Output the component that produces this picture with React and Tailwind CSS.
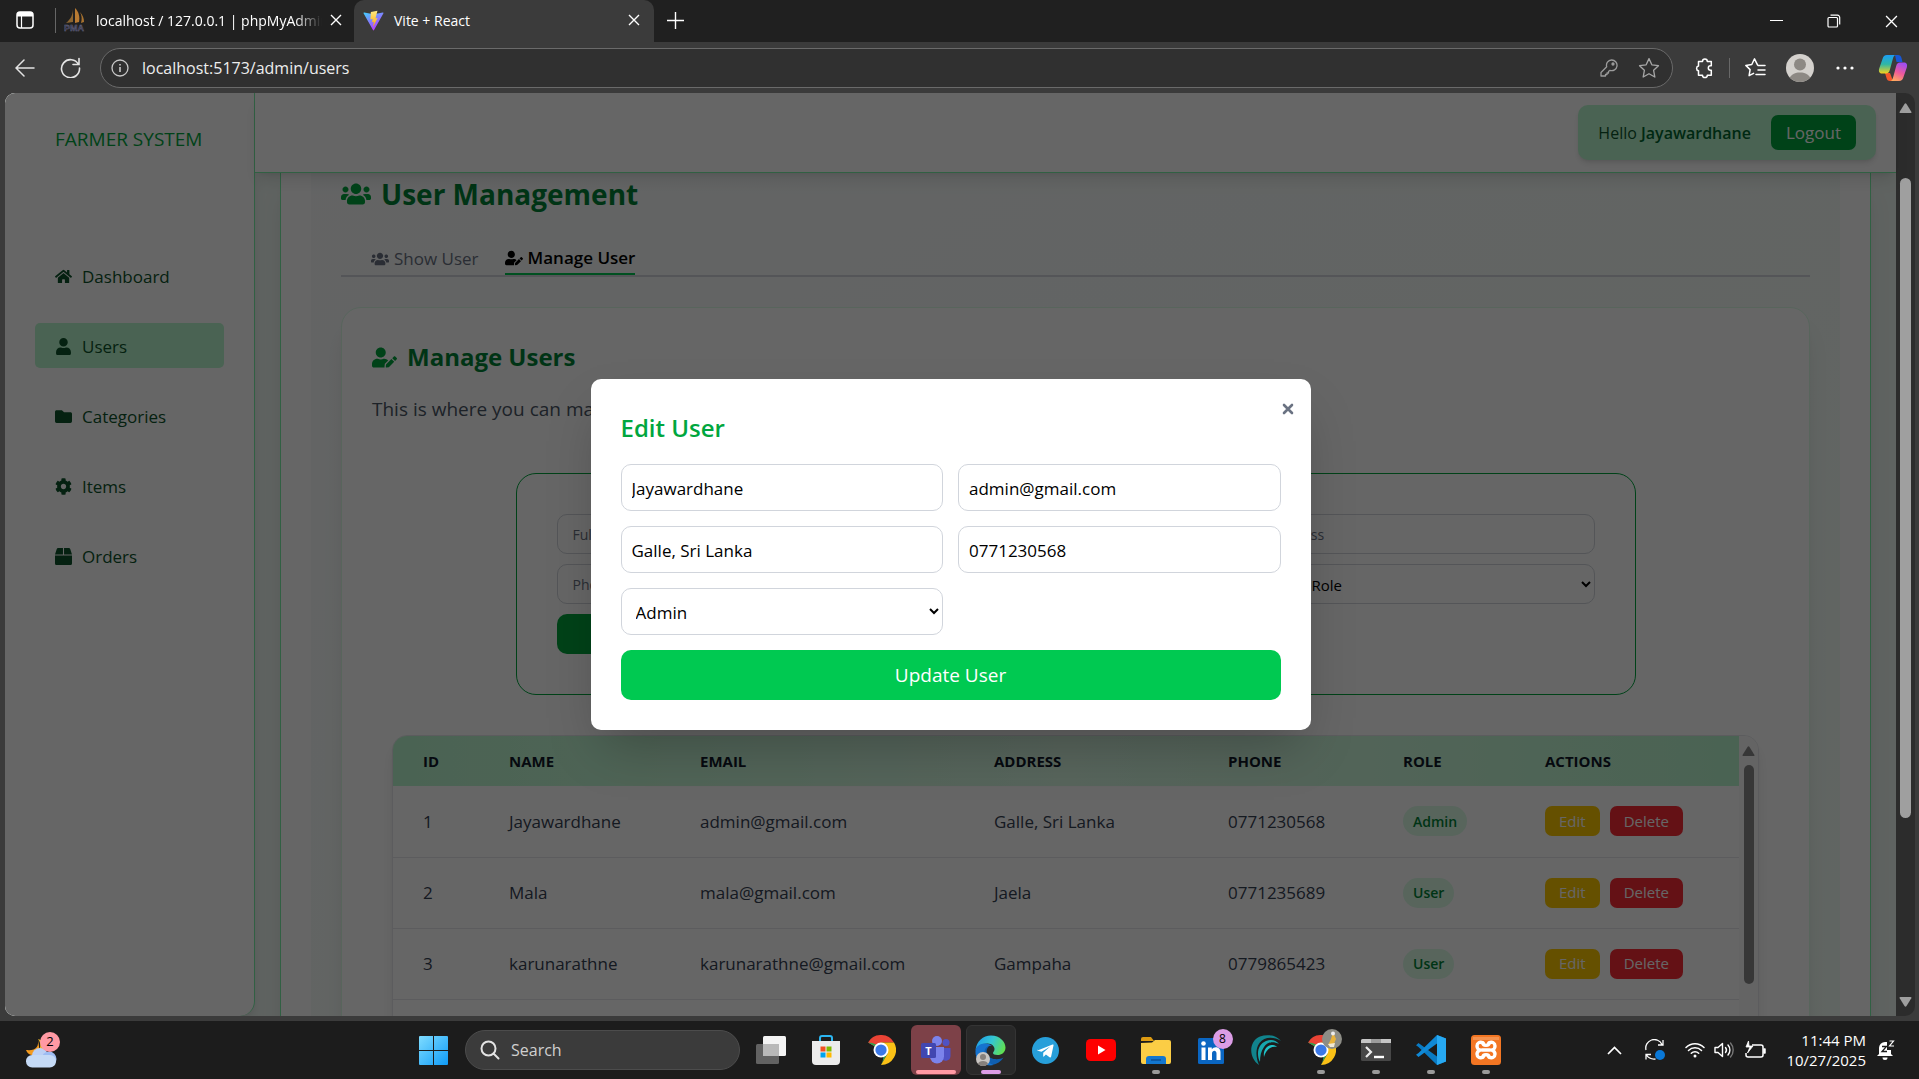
import React from "react";
import { FaHome, FaUser, FaFolder, FaCog, FaBox, FaUsers, FaUserEdit } from "react-icons/fa";

const navItems = [
  { label: "Dashboard", Icon: FaHome },
  { label: "Users", Icon: FaUser, active: true },
  { label: "Categories", Icon: FaFolder },
  { label: "Items", Icon: FaCog },
  { label: "Orders", Icon: FaBox },
];

const users = [
  { id: 1, name: "Jayawardhane", email: "admin@gmail.com", address: "Galle, Sri Lanka", phone: "0771230568", role: "Admin" },
  { id: 2, name: "Mala", email: "mala@gmail.com", address: "Jaela", phone: "0771235689", role: "User" },
  { id: 3, name: "karunarathne", email: "karunarathne@gmail.com", address: "Gampaha", phone: "0779865423", role: "User" },
];

/* ---------- browser window ---------- */

function CloseX({ size = 12, w = 1.4 }) {
  return (
    <svg width={size} height={size} viewBox="0 0 12 12" fill="none" stroke="currentColor" strokeWidth={w}>
      <path d="M1 1l10 10M11 1L1 11" />
    </svg>
  );
}

function ViteLogo() {
  return (
    <svg width="21" height="21" viewBox="0 0 32 32">
      <defs>
        <linearGradient id="viteA" x1="0" y1="0" x2="0.6" y2="1">
          <stop offset="0" stopColor="#41d1ff" />
          <stop offset="1" stopColor="#bd34fe" />
        </linearGradient>
        <linearGradient id="viteB" x1="0" y1="0" x2="0" y2="1">
          <stop offset="0" stopColor="#ffea83" />
          <stop offset="1" stopColor="#ffa800" />
        </linearGradient>
      </defs>
      <path d="M31 5.2L16.8 30.6a.9.9 0 01-1.6 0L1 5.2C.6 4.500 1.100 3.800 1.900 3.900L16 6.400l14.100-2.500c.800-.1 1.300.6.900 1.300z" fill="url(#viteA)" />
      <path d="M22 1.200L12 3.100l-.7 11.300 3.400-.8-1 5.200 2.800-.8-1.300 7.800 7-13.600-3.200.7z" fill="url(#viteB)" />
    </svg>
  );
}

function PmaLogo() {
  return (
    <svg width="22" height="24" viewBox="0 0 22 24">
      <path d="M9 1c0 5-2 10-7 14l7-1z" fill="#8b6430" />
      <path d="M11 0c4 4 5 9 4 14l-4 1z" fill="#b87a32" />
      <path d="M16 4c3 3 4 7 4 10l-3 1c1-4 1-7-1-11z" fill="#a9732f" />
      <text x="0" y="23" fontSize="9" fontWeight="700" fontFamily="Liberation Sans, sans-serif" fill="#30304a" stroke="#6c6c86" strokeWidth="0.400">PMA</text>
    </svg>
  );
}

function TabStrip() {
  return (
    <div className="flex h-[42px] shrink-0 items-stretch bg-[#202020] text-[14px] text-white">
      <button aria-label="Tab actions" className="flex w-[50px] items-center justify-center pb-[2px]">
        <svg width="18" height="18" viewBox="0 0 18 18" fill="none">
          <rect x="1" y="1" width="16" height="16" rx="3" stroke="#fff" strokeWidth="1.500" />
          <path d="M1 3.500a2.500 2.500 0 012.500-2.500h11A2.500 2.500 0 0117 3.500V5.500H1z" fill="#fff" />
          <path d="M5.500 5v12" stroke="#fff" strokeWidth="1.200" />
        </svg>
      </button>
      <div className="flex w-[304px] items-center pb-[2px] pl-[5px]">
        <span className="h-[25px] w-px bg-[#666]" />
        <span className="ml-2"><PmaLogo /></span>
        <span className="ml-[10px] w-[226px] overflow-hidden whitespace-nowrap [mask-image:linear-gradient(90deg,#000_88%,transparent)]">
          localhost / 127.0.0.1 | phpMyAdmin
        </span>
        <button aria-label="Close tab" className="ml-2"><CloseX /></button>
      </div>
      <div className="flex w-[300px] items-center rounded-t-[10px] bg-[#3b3b3b] pr-[14px] pb-[2px] pl-[9px]">
        <ViteLogo />
        <span className="ml-[10px] flex-1">Vite + React</span>
        <button aria-label="Close tab"><CloseX /></button>
      </div>
      <button aria-label="New tab" className="flex w-[43px] items-center justify-center pb-[2px]">
        <svg width="17" height="17" viewBox="0 0 17 17" stroke="#fff" strokeWidth="1.400"><path d="M8.500 0v17M0 8.500h17" /></svg>
      </button>
      <div className="flex-1" />
      <div className="flex items-center">
        <button aria-label="Minimize" className="flex w-[58px] justify-center">
          <svg width="13" height="12" viewBox="0 0 13 12" stroke="#fff"><path d="M0 5.500h13" /></svg>
        </button>
        <button aria-label="Restore" className="flex w-[58px] justify-center">
          <svg width="14" height="14" viewBox="0 0 14 14" fill="none" stroke="#fff" strokeWidth="1.200">
            <rect x="1" y="3.500" width="9.500" height="9.500" rx="1" />
            <path d="M3.500 1.200h7a2.200 2.200 0 012.200 2.200v7" />
          </svg>
        </button>
        <button aria-label="Close window" className="flex w-[56px] justify-center"><CloseX size={13} w={1.200} /></button>
      </div>
    </div>
  );
}

function CopilotLogo() {
  return (
    <svg width="30" height="30" viewBox="0 0 30 30">
      <defs>
        <linearGradient id="cpA" x1="0" y1="0" x2="0" y2="1">
          <stop offset="0" stopColor="#1b9df5" />
          <stop offset="0.500" stopColor="#2fb7a4" />
          <stop offset="1" stopColor="#f5d31b" />
        </linearGradient>
        <linearGradient id="cpB" x1="0.600" y1="0" x2="0.200" y2="1">
          <stop offset="0" stopColor="#a04df0" />
          <stop offset="0.500" stopColor="#ee5a9a" />
          <stop offset="1" stopColor="#ffae5c" />
        </linearGradient>
      </defs>
      <path d="M17 2h3c2 0 3 1 3.500 3l1 4h-6z" fill="#1757d6" />
      <path d="M7 20l5 0 3 8h-3c-2 0-3-1-3.500-3z" fill="#f2572b" />
      <path d="M9 2h9c-2 0-2.600 2-3.200 4l-3 11c-.600 2-1.500 3.500-4 3.500H4c-3 0-3.500-2.500-2.800-5L4.500 6C5.200 3.500 6.500 2 9 2z" fill="url(#cpA)" />
      <path d="M21 28h-9c2 0 2.600-2 3.200-4l3-11c.600-2 1.500-3.500 4-3.500H26c3 0 3.500 2.500 2.800 5L25.500 24c-.700 2.500-2 4-4.500 4z" fill="url(#cpB)" />
    </svg>
  );
}

const starPath = "M10 1.500l2.600 5.600 6 .8-4.400 4.200 1.100 6.100L10 15.200l-5.300 3 1.100-6.100L1.400 7.900l6-.8z";

function Toolbar() {
  return (
    <div className="flex h-[51px] shrink-0 items-center bg-[#3b3b3b] text-[#e4e4e4]">
      <button aria-label="Back" className="flex w-[50px] justify-center">
        <svg width="20" height="18" viewBox="0 0 20 18" fill="none" stroke="currentColor" strokeWidth="1.500" strokeLinecap="round" strokeLinejoin="round"><path d="M19 9H1.500M9 1L1 9l8 8" /></svg>
      </button>
      <button aria-label="Refresh" className="flex w-10 justify-center">
        <svg width="21" height="21" viewBox="0 0 21 21" fill="none" stroke="currentColor" strokeWidth="1.600" strokeLinecap="round"><path d="M18.500 7.500A9 9 0 1019.500 11M19 1.500v6h-6" /></svg>
      </button>
      <div className="ml-[10px] flex h-10 flex-1 items-center rounded-full border border-[#6a6a6a] bg-[#303030] pr-3 pl-[10px]">
        <svg width="18" height="18" viewBox="0 0 18 18" fill="none" stroke="#c8c8c8" strokeWidth="1.300"><circle cx="9" cy="9" r="8" /><path d="M9 8v5M9 5v1.500" strokeWidth="1.600" /></svg>
        <input aria-label="Address" defaultValue="localhost:5173/admin/users" className="ml-[13px] min-w-0 flex-1 bg-transparent text-[16px] text-[#ededed] outline-none" />
        <button aria-label="Saved passwords">
          <svg width="18" height="18" viewBox="0 0 18 18" fill="none" stroke="#9c9c9c" strokeWidth="1.300" strokeLinejoin="round"><path d="M11.500 1a5.300 5.300 0 11-1.500 10.300L8.500 12.500v1.500H7v1.500H5.500V17H1v-3.500l5.700-5.700A5.300 5.300 0 0111.500 1z" /><circle cx="13" cy="5" r="1" fill="#9c9c9c" /></svg>
        </button>
        <button aria-label="Add to favorites" className="ml-5">
          <svg width="22" height="22" viewBox="0 0 20 20" fill="none" stroke="#a6a6a6" strokeWidth="1.200" strokeLinejoin="round"><path d={starPath} /></svg>
        </button>
      </div>
      <button aria-label="Extensions" className="ml-[21px]">
        <svg width="22" height="22" viewBox="0 0 22 22" fill="none" stroke="#fff" strokeWidth="1.500" strokeLinejoin="round"><path d="M8.500 4.500a2.400 2.400 0 014.800 0h4v4.300h-.8a2.200 2.200 0 000 4.400h.8v5h-4a2.400 2.400 0 01-4.800 0h-4v-4.400a2.400 2.400 0 010-4.700V4.500z" /></svg>
      </button>
      <span className="ml-[13px] h-[20px] w-px bg-[#686868]" />
      <button aria-label="Favorites" className="ml-[14px]">
        <svg width="22" height="22" viewBox="0 0 22 22" fill="none" stroke="#fff" strokeWidth="1.500" strokeLinejoin="round" strokeLinecap="round"><path d="M13.500 7.800L10.500 1.800 7.800 7.500l-6 .9 4.300 4.200-1 6.100 4.500-2.300" /><path d="M14 8.500h7M14 13h7M12 17.500h9" /></svg>
      </button>
      <button aria-label="Profile" className="ml-5 flex h-[28px] w-[28px] items-end justify-center overflow-hidden rounded-full bg-[#d4d1cd]">
        <svg width="28" height="28" viewBox="0 0 28 28" fill="#8d8984"><circle cx="14" cy="10.500" r="6" /><path d="M3 28c0-7 5-9.500 11-9.500s11 2.500 11 9.500z" /></svg>
      </button>
      <button aria-label="More" className="ml-[22px]">
        <svg width="18" height="4" viewBox="0 0 18 4" fill="#fff"><circle cx="2" cy="2" r="1.600" /><circle cx="9" cy="2" r="1.600" /><circle cx="16" cy="2" r="1.600" /></svg>
      </button>
      <button aria-label="Copilot" className="mr-[11px] ml-6"><CopilotLogo /></button>
    </div>
  );
}

function Triangle({ down, className }) {
  return (
    <svg width="13" height="10" viewBox="0 0 13 10" className={className} fill="currentColor">
      <path d={down ? "M1.500 0h10q1.500 0 .8 1.300L7.500 9q-1 1.300-2 0L.7 1.300Q0 0 1.500 0z" : "M1.500 10h10q1.500 0 .8-1.300L7.500 1q-1-1.300-2 0L.7 8.700Q0 10 1.500 10z"} />
    </svg>
  );
}

/* ---------- web page ---------- */

function Sidebar() {
  return (
    <aside className="z-10 flex w-[250px] shrink-0 flex-col rounded-br-[15px] border-r border-green-300 bg-white px-[30px] pt-8 shadow-lg">
      <div className="pl-5 text-[19px] leading-7 text-green-600">FARMER SYSTEM</div>
      <nav className="mt-[100px] flex flex-col gap-[25px]">
        {navItems.map(({ label, Icon, active }) => (
          <a
            key={label}
            href="#"
            className={
              active
                ? "flex h-[45px] items-center rounded-[5px] bg-green-200 pt-[2px] pl-5 text-[17px] text-green-900"
                : "flex h-[45px] items-center rounded-[5px] pt-[2px] pl-5 text-[17px] text-green-900"
            }
          >
            <Icon size={17} />
            <span className="ml-[10px]">{label}</span>
          </a>
        ))}
      </nav>
    </aside>
  );
}

function Header() {
  return (
    <header className="relative z-10 flex h-20 shrink-0 items-center justify-end border-b border-green-300 bg-white pr-5 shadow-lg">
      <div className="flex h-[55px] items-center rounded-[10px] bg-green-200 px-5 text-[16px] text-green-900 shadow-md">
        <span>Hello <b className="font-semibold text-green-800">Jayawardhane</b></span>
        <button className="ml-5 h-[35px] rounded-[7px] bg-green-600 px-[15px] text-[17px] text-white">Logout</button>
      </div>
    </header>
  );
}

const smallField = "h-10 w-full min-w-0 rounded-[10px] border border-gray-300 bg-white px-[15px] text-[14px] placeholder:text-gray-500";

function AddUserForm() {
  return (
    <form className="mx-auto mt-[49px] max-w-[1120px] rounded-[20px] border border-green-600 p-10">
      <div className="grid grid-cols-3 gap-[10px]">
        <input aria-label="Full Name" placeholder="Full Name" className={smallField} />
        <input aria-label="Email" placeholder="Email" className={smallField} />
        <input aria-label="Address" placeholder="Address" className={smallField} />
        <input aria-label="Phone" placeholder="Phone" className={smallField} />
        <input aria-label="Password" placeholder="Password" className={smallField} />
        <select aria-label="Select Role" className="h-10 w-full rounded-[10px] border border-gray-300 bg-white px-[6px] pt-[2px] text-[15px]">
          <option>Select Role</option>
        </select>
        <button type="button" className="h-10 rounded-[10px] bg-green-600 text-[15px] text-white">Add User</button>
      </div>
    </form>
  );
}

function UserTable() {
  return (
    <div className="mx-5 mt-10 flex overflow-hidden rounded-t-[15px] border border-gray-200 bg-white shadow-lg">
      <table className="flex-1 table-fixed border-collapse text-left text-[17px] text-gray-700">
        <colgroup>
          <col className="w-[86px]" />
          <col className="w-[191px]" />
          <col className="w-[294px]" />
          <col className="w-[234px]" />
          <col className="w-[175px]" />
          <col className="w-[142px]" />
          <col className="w-[224px]" />
        </colgroup>
        <thead>
          <tr className="h-[50px] bg-linear-to-r from-green-200 via-green-100 to-green-200 text-[15px] text-gray-900">
            {["ID", "NAME", "EMAIL", "ADDRESS", "PHONE", "ROLE", "ACTIONS"].map((h) => (
              <th key={h} className="pl-[30px] font-bold">{h}</th>
            ))}
          </tr>
        </thead>
        <tbody>
          {users.map((u) => (
            <tr key={u.id} className="h-[71px] border-b border-gray-200">
              <td className="pl-[30px]">{u.id}</td>
              <td className="pl-[30px]">{u.name}</td>
              <td className="pl-[30px]">{u.email}</td>
              <td className="pl-[30px]">{u.address}</td>
              <td className="pl-[30px]">{u.phone}</td>
              <td className="pl-[30px]">
                <span className="inline-flex h-[30px] items-center rounded-full bg-green-100 px-[10px] text-[14px] font-semibold text-green-700">{u.role}</span>
              </td>
              <td className="pl-[30px]">
                <div className="flex gap-[10px] text-[15px] text-white">
                  <button className="h-[30px] rounded-[7px] bg-yellow-400 px-[14px]">Edit</button>
                  <button className="h-[30px] rounded-[7px] bg-red-500 px-[14px]">Delete</button>
                </div>
              </td>
            </tr>
          ))}
          <tr className="h-[71px]"><td colSpan={7} /></tr>
        </tbody>
      </table>
      <div className="flex w-[19px] shrink-0 flex-col items-center bg-[#fafafa] pt-[10px] text-[#8b8b8b]">
        <Triangle />
        <div className="mt-[9px] h-[219px] w-[10px] rounded-full bg-[#8b8b8b]" />
      </div>
    </div>
  );
}

function Content() {
  return (
    <div className="min-h-0 flex-1 overflow-hidden bg-[#eef7f2] px-[25px]">
      <div className="border-x border-green-300 bg-white px-[30px] shadow-xl">
        <main className="bg-linear-to-br from-gray-50 to-green-50 px-[30px]">
          <h1 className="flex h-[42px] items-center text-[28px] font-bold text-green-700">
            <FaUsers size={30} className="text-green-600" />
            <span className="ml-[10px]">User Management</span>
          </h1>
          <div className="mt-7 flex gap-[26px] border-b-2 border-gray-300 pl-[30px] text-[17px]">
            <button className="flex h-8 items-center gap-[5px] pb-px text-gray-500"><FaUsers size={18} />Show User</button>
            <button className="flex h-8 items-center gap-[5px] border-b-2 border-green-500 font-semibold text-black"><FaUserEdit size={18} />Manage User</button>
          </div>
          <section className="mt-[30px] rounded-[20px] border border-green-100 bg-white p-[30px] shadow-xl">
            <h2 className="flex h-[38px] items-center text-[24px] font-bold text-green-700">
              <FaUserEdit size={25} className="text-green-600" />
              <span className="ml-[10px]">Manage Users</span>
            </h2>
            <p className="mt-[18px] text-[19px] leading-[30px] text-gray-600">This is where you can manage all users.</p>
            <AddUserForm />
            <UserTable />
          </section>
        </main>
      </div>
    </div>
  );
}

const modalField = "h-[47px] w-full min-w-0 rounded-[10px] border border-gray-300 bg-white px-[10px] pt-[2px] text-[17px] text-black";

function EditModal() {
  return (
    <div role="dialog" aria-label="Edit User" className="relative w-[720px] rounded-[10px] bg-white px-[30px] pt-[30px] pb-[30px] shadow-2xl">
      <button aria-label="Close" className="absolute top-5 right-[17px] flex h-5 w-3 items-center justify-center text-gray-500">
        <svg width="12" height="12" viewBox="0 0 12 12" fill="none" stroke="currentColor" strokeWidth="2.600" strokeLinecap="round"><path d="M2 2l8 8M10 2l-8 8" /></svg>
      </button>
      <h2 className="text-[24px] leading-[38px] font-semibold text-green-600">Edit User</h2>
      <form className="mt-[17px] grid grid-cols-2 gap-[15px]">
        <input aria-label="Full name" defaultValue="Jayawardhane" className={modalField} />
        <input aria-label="Email" defaultValue="admin@gmail.com" className={modalField} />
        <input aria-label="Address" defaultValue="Galle, Sri Lanka" className={modalField} />
        <input aria-label="Phone" defaultValue="0771230568" className={modalField} />
        <select aria-label="Role" defaultValue="Admin" className={modalField}>
          <option>Admin</option>
          <option>User</option>
        </select>
        <button type="button" className="col-span-2 h-[50px] rounded-[10px] bg-[#00c951] text-[19px] text-white">Update User</button>
      </form>
    </div>
  );
}

/* ---------- taskbar ---------- */

function ChromeLogo() {
  return (
    <svg width="30" height="30" viewBox="0 0 48 48">
      <path d="M24 24L3.200 12A24 24 0 0144.800 12H24z" fill="#ea4335" />
      <path d="M24 24l10.400 6L24 48A24 24 0 003.200 12z" fill="#34a04f" />
      <path d="M24 12h20.800A24 24 0 0124 48l10.400-18z" fill="#fbc116" />
      <circle cx="24" cy="24" r="12" fill="#fff" />
      <circle cx="24" cy="24" r="9" fill="#3b78e7" />
    </svg>
  );
}

function AppIcon({ name }) {
  switch (name) {
    case "Task view":
      return (
        <svg width="30" height="28" viewBox="0 0 30 28"><rect x="7" y="0" width="23" height="20" rx="1.500" fill="#f4f4f4" /><rect x="0" y="8" width="23" height="20" rx="1.500" fill="#6e6e6e" fillOpacity="0.850" /><path d="M7 8h16v12H7z" fill="#b9b9b9" /></svg>
      );
    case "Microsoft Store":
      return (
        <svg width="30" height="30" viewBox="0 0 30 30"><path d="M9 7V3a2 2 0 012-2h8a2 2 0 012 2v4" fill="none" stroke="#2bb5f0" strokeWidth="2" /><path d="M1 6h28v20a4 4 0 01-4 4H5a4 4 0 01-4-4z" fill="#ececec" /><path d="M9.500 11.500h5v5h-5z" fill="#f25022" /><path d="M15.500 11.500h5v5h-5z" fill="#7fba00" /><path d="M9.500 17.500h5v5h-5z" fill="#00a4ef" /><path d="M15.500 17.500h5v5h-5z" fill="#ffb900" /></svg>
      );
    case "Chrome":
      return <ChromeLogo />;
    case "Teams":
      return (
        <svg width="30" height="28" viewBox="0 0 30 28"><circle cx="25" cy="6.500" r="3.500" fill="#4f52c4" /><path d="M20 12h9.500v8a5 5 0 01-9.500 2z" fill="#4f52c4" /><circle cx="16" cy="5" r="5" fill="#7b83eb" /><path d="M9 11h14v9.500a7 7 0 01-14 0z" fill="#7b83eb" /><rect x="0" y="7" width="15" height="15" rx="1.500" fill="#4147b0" /><text x="7.500" y="18.500" textAnchor="middle" fontSize="11" fontWeight="700" fontFamily="Open Sans, sans-serif" fill="#fff">T</text></svg>
      );
    case "Edge":
      return (
        <svg width="31" height="31" viewBox="0 0 31 31">
          <defs>
            <linearGradient id="edgeA" x1="0" y1="0.300" x2="1" y2="0.600"><stop offset="0" stopColor="#1e9de8" /><stop offset="0.500" stopColor="#34c6d3" /><stop offset="1" stopColor="#62e04e" /></linearGradient>
          </defs>
          <path d="M1 17C-.500 26 8 31.500 17 30c5-.8 9-3.500 11.500-7.500-4 2.500-14 3-16.500-4-1-3 0-5.500 2-7.500C8 7 2 11 1 17z" fill="#0f5fb0" />
          <path d="M.500 15C1.500 6 8 .500 16 .500c9 0 14.500 6.500 14.500 12 0 5-4 7.500-8 7.500-3 0-4.500-1-4.500-2 0-1 1.500-1.500 1.500-4 0-2.500-2.500-5.500-7-5.500C6.500 8.500 2 11.500.500 15z" fill="url(#edgeA)" />
          <path d="M.500 16c0-5 5-7.500 10-7.500 3 0 5 1 6.500 2.500-5-1-8 3-7.500 8 .4 4.500 4 9.500 9 11C8 32 0 25 .500 16z" fill="#1673cf" />
          <circle cx="8" cy="24" r="7" fill="#c9c6c3" /><circle cx="8" cy="22" r="3" fill="#86817d" /><path d="M3 29c.5-4 9.500-4 10 0-2.500 2.500-7.500 2.500-10 0z" fill="#86817d" />
        </svg>
      );
    case "Telegram":
      return (
        <svg width="27" height="27" viewBox="0 0 27 27"><circle cx="13.500" cy="13.500" r="13.500" fill="#279fda" /><path d="M5.500 13.500L20.500 7.500c.8-.3 1.200.2 1 1l-2.400 11.200c-.2.800-.8 1-1.500.5l-3.700-2.700-2 2c-.4.300-.7.200-.7-.3v-3.400l7-6.400-8.700 5.400-3.800-1.100c-.8-.3-.8-.7-.2-1.200z" fill="#fff" /></svg>
      );
    case "YouTube":
      return <svg width="30" height="22" viewBox="0 0 30 22"><rect width="30" height="22" rx="4.500" fill="#fe0000" /><path d="M12 6.500l7.500 4.500-7.500 4.500z" fill="#fff" /></svg>;
    case "File Explorer":
      return <svg width="30" height="27" viewBox="0 0 30 27"><path d="M0 2a2 2 0 012-2h8l3 4H0z" fill="#dd9b12" /><path d="M0 6l11-.5L14 3h14a2 2 0 012 2v20a2 2 0 01-2 2H2a2 2 0 01-2-2z" fill="#fbcd45" /><path d="M5 27v-5a3 3 0 013-3h14a3 3 0 013 3v5z" fill="#1377cf" /><path d="M10 23h10" stroke="#0b4f97" strokeWidth="1.500" /></svg>;
    case "LinkedIn":
      return (
        <svg width="38" height="36" viewBox="0 0 38 36"><rect x="6" y="6" width="26" height="26" rx="1.500" fill="#0a66c2" /><path d="M9.500 15.500h4V28h-4zM16 15.500h3.800v1.800c2-3.200 8.700-3 8.700 3V28h-4v-6.500c0-4-4.500-3.500-4.500 0V28h-4z" fill="#fff" /><circle cx="11.500" cy="11.500" r="2.300" fill="#fff" /></svg>
      );
    case "Tide":
      return (
        <svg width="30" height="30" viewBox="0 0 30 30">
          <path d="M8 30C-3 22-2 6 9 1.500 16-1 25 0 30 6 22 1 13 2 8.500 8 4 14 5 23 8 30z" fill="#11848d" />
          <path d="M9 27C5 19 7 9 15 6c5-2 10-1 13 3-6-3-12-2-15 3-3 4-4 9-4 15z" fill="#17a6ad" />
          <path d="M13 22c-1-6 2-12 9-12 2 0 3 1 4 2-7-1-11 3-13 10z" fill="#20c3c9" />
        </svg>
      );
    case "Terminal":
      return <svg width="30" height="22" viewBox="0 0 30 22"><rect width="30" height="22" rx="1.500" fill="#474747" /><path d="M0 1.500A1.500 1.500 0 011.500 0H30v4H0z" fill="#c6c6c6" /><path d="M10 0h10v4H10z" fill="#9c9c9c" /><path d="M5 8l5 5-5 5" fill="none" stroke="#ececec" strokeWidth="2.200" /><path d="M13 18h10" stroke="#fff" strokeWidth="2.400" /></svg>;
    case "VS Code":
      return <svg width="30" height="30" viewBox="0 0 30 30"><path d="M21 0l9 3.500v23L21 30 2.500 12 0 10.200 2.500 8 21 21.500z" fill="#0a7bc4" /><path d="M21 8.500L2.500 22 0 19.800 2.500 18 21 0z" fill="#1089d6" /><path d="M21 0l9 3.500v23L21 30z" fill="#27a9f2" /></svg>;
    case "XAMPP":
      return <svg width="30" height="30" viewBox="0 0 30 30"><rect width="30" height="30" rx="3.500" fill="#f37623" /><path d="M2 2h26v3H2z" fill="#f9a66d" opacity="0.600" /><g fill="none" stroke="#fff" strokeWidth="3.400" strokeLinejoin="round" strokeLinecap="round"><path d="M12 8c-3-2-6 0-6 3s2 4 3 4-3 1-3 4 3 5 6 3M18 8c3-2 6 0 6 3s-2 4-3 4 3 1 3 4-3 5-6 3" /><path d="M12 8c0 3 6 3 6 0M12 22c0-3 6-3 6 0M11 15h8" /></g></svg>;
    default:
      return null;
  }
}

const apps = [
  { name: "Task view" },
  { name: "Microsoft Store" },
  { name: "Chrome" },
  { name: "Teams", alert: true },
  { name: "Edge", active: true },
  { name: "Telegram" },
  { name: "YouTube" },
  { name: "File Explorer", open: true },
  { name: "LinkedIn", badge: "8" },
  { name: "Tide" },
  { name: "Chrome", open: true, avatar: true },
  { name: "Terminal", open: true },
  { name: "VS Code", open: true },
  { name: "XAMPP", open: true },
];

function TaskApp({ app }) {
  const box = app.alert
    ? "relative flex h-[50px] w-[50px] items-center justify-center rounded-[6px] bg-[#7d4148]"
    : app.active
      ? "relative flex h-[50px] w-[50px] items-center justify-center rounded-[6px] border border-[#343434] bg-[#292929]"
      : "relative flex h-[50px] w-[50px] items-center justify-center rounded-[6px]";
  return (
    <button aria-label={app.name} className="flex w-[55px] justify-center">
      <span className={box}>
        <AppIcon name={app.name} />
        {app.badge && (
          <span className="absolute top-[4px] right-[3px] flex h-5 w-5 items-center justify-center rounded-full bg-[#dc9de6] text-[12px] text-black">{app.badge}</span>
        )}
        {app.avatar && (
          <svg width="20" height="20" viewBox="0 0 20 20" className="absolute top-[4px] right-[4px]"><circle cx="10" cy="10" r="10" fill="#8d8d86" /><path d="M11 3l3 7-3 7-5-1 3-6z" fill="#e8b33b" /><circle cx="11" cy="4.500" r="2" fill="#eee" /><path d="M6 15l7-1-1 4-4 0z" fill="#f1ead6" /></svg>
        )}
        {app.alert && <span className="absolute bottom-px left-[5px] h-1 w-10 rounded-full bg-[#ff9aa4]" />}
        {app.active && <span className="absolute bottom-0 left-[14px] h-1 w-5 rounded-full bg-[#dc9de6]" />}
        {app.open && <span className="absolute bottom-px left-[21px] h-1 w-2 rounded-full bg-[#9a9a9a]" />}
      </span>
    </button>
  );
}

function Tray() {
  return (
    <div className="flex items-center justify-end pr-[24px] text-white">
      <button aria-label="Hidden icons">
        <svg width="15" height="9" viewBox="0 0 15 9" fill="none" stroke="#fff" strokeWidth="1.700"><path d="M1 8l6.500-6.500L14 8" /></svg>
      </button>
      <svg width="22" height="22" viewBox="0 0 22 22" fill="none" stroke="#fff" strokeWidth="1.300" className="ml-[22px]"><path d="M2 11A8.500 8.500 0 0118 5.500M19 1v5h-5M2 20.500v-5h5M2.500 16c2 3 5 4.500 9 4" /><circle cx="16" cy="16" r="5" fill="#0a78d7" stroke="none" /></svg>
      <svg width="20" height="16" viewBox="0 0 20 16" fill="none" stroke="#fff" strokeWidth="1.500" strokeLinecap="round" className="ml-[19px]"><path d="M1 5.500a12.700 12.700 0 0118 0M3.500 8.500a9.200 9.200 0 0113 0M6.300 11.300a5.200 5.200 0 017.400 0" /><circle cx="10" cy="14" r="1.500" fill="#fff" stroke="none" /></svg>
      <svg width="20" height="18" viewBox="0 0 20 18" fill="none" stroke="#fff" strokeWidth="1.400" strokeLinejoin="round" strokeLinecap="round" className="ml-[9px]"><path d="M1 6.500h3L8.500 2.500v13L4 11.500H1zM11.500 6.500a4 4 0 010 5M14 4a7.500 7.500 0 010 10" /><path d="M16.500 2a10.500 10.500 0 010 14" stroke="#777" /></svg>
      <svg width="22" height="20" viewBox="0 0 22 20" fill="none" stroke="#fff" strokeWidth="1.500" strokeLinejoin="round" className="ml-[10px]"><path d="M8 5h9a2 2 0 012 2v8a2 2 0 01-2 2H4a2 2 0 01-2-2v-2" /><path d="M20 9v4h1V9z" fill="#fff" /><path d="M4.500 1L2 7h4l-2.500 6L9 6H5z" fill="#fff" strokeWidth="0.800" /></svg>
      <div className="ml-5 text-right text-[15px] leading-5">
        <div>11:44 PM</div>
        <div>10/27/2025</div>
      </div>
      <svg width="18" height="20" viewBox="0 0 18 20" className="ml-[11px]"><path d="M2 14V8a6 6 0 016-6h2v8h4v4l2 2H0z" fill="#fff" /><path d="M5.500 17.500h5a2.500 2.500 0 01-5 0z" fill="#fff" /><path d="M5 6.500h4.500L5 11.500h5M12 1h4.500L12 6h5" fill="none" stroke="#1c1c1c" strokeWidth="1.300" /><path d="M12.500 1h4l-4 5h4.500" fill="none" stroke="#fff" strokeWidth="1.200" /></svg>
    </div>
  );
}

function Taskbar() {
  return (
    <footer className="grid h-[58px] shrink-0 grid-cols-[1fr_auto_1fr] items-center bg-[#1c1c1c]">
      <button aria-label="Weather" className="relative ml-[26px] h-[36px] w-[35px]">
        <svg width="35" height="36" viewBox="0 0 35 36"><path d="M12 7c1 8-2 12-12 11 2 6 10 7 14 4z" fill="#f39a1e" /><path d="M12 7c3 4 3 8 0 13l6-3V9z" fill="#e9b42b" /><circle cx="14" cy="24" r="8" fill="#bcd0f5" /><circle cx="23" cy="27" r="7.500" fill="#9dbcf3" /><rect x="0" y="23" width="30" height="12.500" rx="6.200" fill="#c5daf6" /></svg>
        <span className="absolute top-0 left-[14px] flex h-5 w-5 items-center justify-center rounded-full bg-[#ff99a4] text-[13px] text-black">2</span>
      </button>
      <div className="flex items-center">
        <button aria-label="Start" className="flex w-[55px] justify-center">
          <svg width="29" height="29" viewBox="0 0 29 29">
            <defs><linearGradient id="winA" x1="0" y1="0" x2="1" y2="1" gradientUnits="objectBoundingBox"><stop offset="0" stopColor="#7fdcff" /><stop offset="1" stopColor="#0f9bf7" /></linearGradient></defs>
            <path d="M0 1a1 1 0 011-1h13v14H0zM15 0h13a1 1 0 011 1v13H15zM0 15h14v14H1a1 1 0 01-1-1zM15 15h14v13a1 1 0 01-1 1H15z" fill="url(#winA)" />
          </svg>
        </button>
        <label className="mr-[3px] ml-1 flex h-10 w-[275px] items-center rounded-full border border-[#4c4c4c] bg-[#3b3b3b] pl-[14px]">
          <svg width="20" height="20" viewBox="0 0 20 20" fill="none" stroke="#e3e3e3" strokeWidth="2" strokeLinecap="round"><circle cx="8.500" cy="8.500" r="7" /><path d="M13.500 13.500l5 5" /></svg>
          <input aria-label="Search" placeholder="Search" className="ml-[11px] min-w-0 flex-1 bg-transparent text-[16px] outline-none placeholder:text-[#cfcfcf]" />
        </label>
        {apps.map((app, i) => <TaskApp key={i} app={app} />)}
      </div>
      <Tray />
    </footer>
  );
}

export default function App() {
  return (
    <div className="flex h-screen flex-col overflow-hidden bg-[#3b3b3b] font-['Open_Sans','Noto_Sans',sans-serif]">
      <TabStrip />
      <Toolbar />
      <div className="mr-[4px] mb-[5px] ml-[5px] flex min-h-0 flex-1 overflow-hidden rounded-[10px]">
        <div className="relative flex min-w-0 flex-1 bg-[#eef7f2]">
          <Sidebar />
          <div className="flex min-w-0 flex-1 flex-col">
            <Header />
            <Content />
          </div>
          <div className="absolute inset-0 z-20 flex items-center justify-center bg-black/60">
            <EditModal />
          </div>
        </div>
        <div className="flex w-[19px] shrink-0 flex-col items-center bg-[#2c2c2c] pt-[10px] pb-[9px] text-[#9f9f9f]">
          <Triangle />
          <div className="mt-[65px] mb-[179px] w-[11px] flex-1 rounded-full bg-[#9f9f9f]" />
          <Triangle down />
        </div>
      </div>
      <Taskbar />
    </div>
  );
}
